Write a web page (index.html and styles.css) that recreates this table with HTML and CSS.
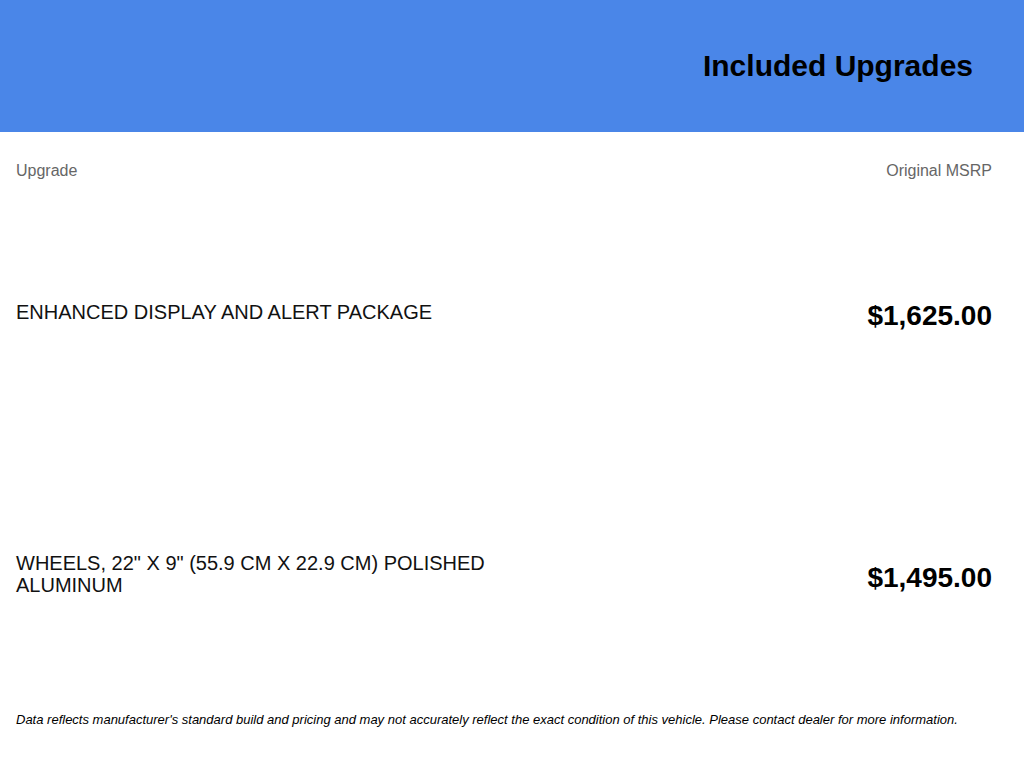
FILE: index.html
```html
<!DOCTYPE html>
<html lang="en">
<head>
    <meta charset="UTF-8">
    <meta name="viewport" content="width=device-width, initial-scale=1.0">
    <title>Included Upgrades</title>
    <link rel="stylesheet" href="styles.css">
</head>
<body>
    <header class="banner">
        <h1>Included Upgrades</h1>
    </header>
    <main class="upgrades">
        <div class="columns">
            <span>Upgrade</span>
            <span>Original MSRP</span>
        </div>
        <div class="upgrade-row">
            <div class="upgrade-name">ENHANCED DISPLAY AND ALERT PACKAGE</div>
            <div class="upgrade-price">$1,625.00</div>
        </div>
        <div class="upgrade-row">
            <div class="upgrade-name">WHEELS, 22" X 9" (55.9 CM X 22.9 CM) POLISHED ALUMINUM</div>
            <div class="upgrade-price">$1,495.00</div>
        </div>
        <p class="disclaimer">Data reflects manufacturer's standard build and pricing and may not accurately reflect the exact condition of this vehicle. Please contact dealer for more information.</p>
    </main>
</body>
</html>
```

FILE: styles.css
```css
body {
    font-family: "Liberation Sans", Arial, sans-serif;
    background-color: #fff;
    color: #000;
    margin: 0;
}
.banner {
    height: 132px;
    background-color: #4a86e8;
    display: flex;
    align-items: center;
    justify-content: flex-end;
    padding: 0 51px 0 16px;
}
.banner h1 {
    margin: 0;
    font-size: 30px;
    line-height: 34px;
    font-weight: bold;
    color: #000;
}
.upgrades {
    padding: 0 32px 0 16px;
}
.columns {
    display: flex;
    justify-content: space-between;
    padding-top: 30px;
    margin-bottom: 5px;
    font-size: 16px;
    line-height: 18px;
    color: #666;
}
.upgrade-row {
    height: 262px;
    display: flex;
    justify-content: space-between;
    align-items: center;
}
.upgrade-name {
    width: 50%;
    font-size: 20px;
    line-height: 22px;
    margin-bottom: 9px;
    color: #111;
}
.upgrade-price {
    font-size: 28px;
    line-height: 32px;
    font-weight: bold;
    color: #000;
}
.disclaimer {
    margin: 0;
    padding-top: 3px;
    font-size: 13px;
    line-height: 15px;
    font-style: italic;
    color: #000;
}
```
